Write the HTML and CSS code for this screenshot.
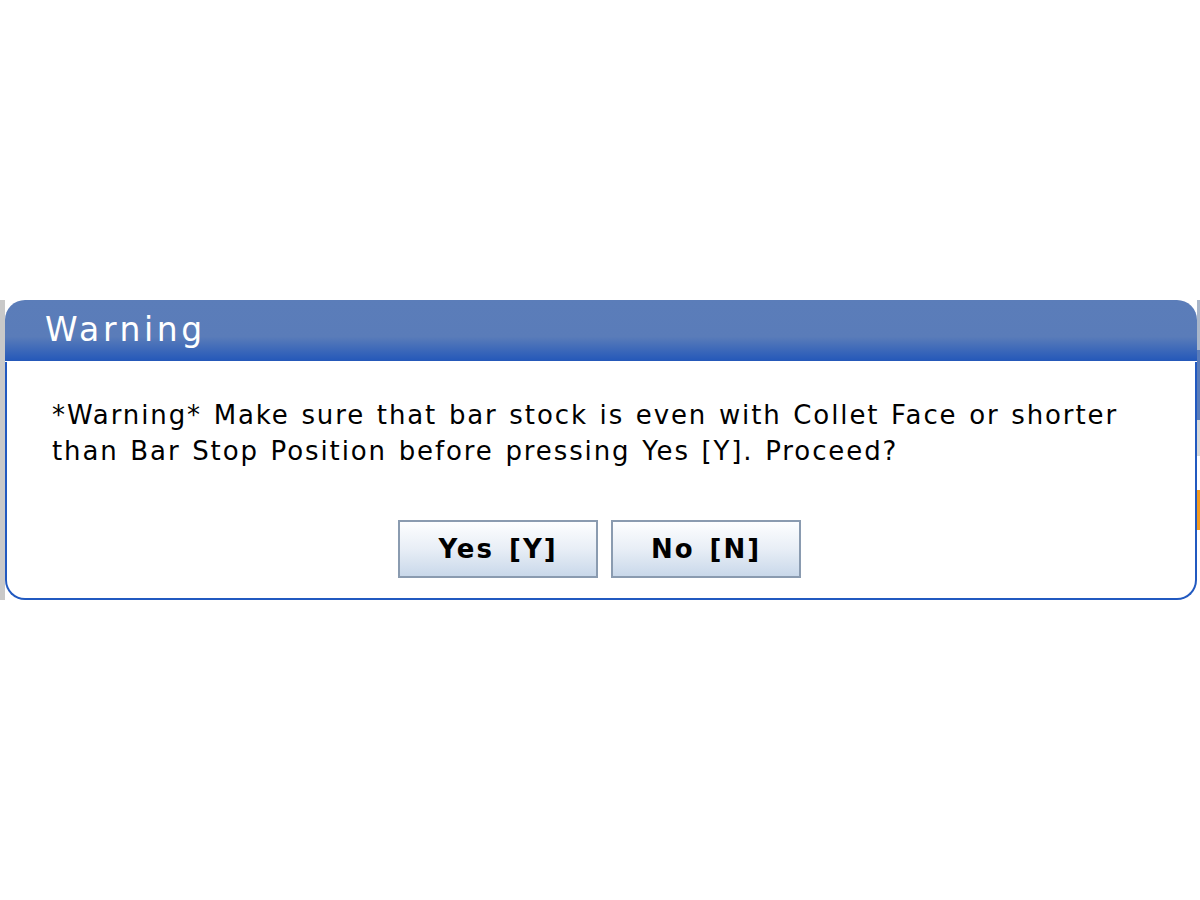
FILE: index.html
```html
<!DOCTYPE html>
<html lang="en">
  <head>
    <meta charset="UTF-8" />
    <meta name="viewport" content="width=device-width, initial-scale=1.0" />
    <title>Warning</title>
    <link rel="stylesheet" href="styles.css">
  </head>
  <body>
    <div class="screen">
      <div class="edge-left"></div>
      <div class="dialog">
        <div class="dialog-title">Warning</div>
        <div class="dialog-body">
          <p class="dialog-text">*Warning* Make sure that bar stock is even with Collet Face or shorter than Bar Stop Position before pressing Yes [Y]. Proceed?</p>
          <div class="dialog-buttons">
            <button class="dialog-button yes">Yes [Y]</button>
            <button class="dialog-button no">No [N]</button>
          </div>
        </div>
      </div>
      <div class="edge-right">
        <span class="edge-piece grey"></span>
        <span class="edge-piece blue"></span>
        <span class="edge-piece light"></span>
        <span class="edge-piece white"></span>
        <span class="edge-piece orange"></span>
        <span class="edge-piece white tall"></span>
      </div>
    </div>
  </body>
</html>
```

FILE: styles.css
```css
* {
  margin: 0;
  padding: 0;
  box-sizing: border-box;
}

body {
  background-color: #fff;
  font-family: "DejaVu Sans", sans-serif;
}

.screen {
  display: flex;
  margin-top: 300px;
  height: 300px;
}

.edge-left {
  width: 5px;
  background-color: #c9c9c9;
}

.dialog {
  flex: 1;
  display: flex;
  flex-direction: column;
}

.dialog-title {
  height: 62px;
  padding: 10px 0 0 40px;
  border-radius: 20px 20px 0 0;
  background: linear-gradient(to bottom, #5b7db9 0%, #5a7cb9 60%, #2458b9 100%);
  color: #fff;
  font-size: 33px;
  letter-spacing: 3.6px;
  line-height: 40px;
  border-bottom: 1px solid #fff;
}

.dialog-body {
  flex: 1;
  border: 2px solid #2159c0;
  border-top: none;
  border-radius: 0 0 20px 20px;
  background-color: #fff;
  padding: 35px 0 0 45px;
}

.dialog-text {
  color: #000;
  font-size: 26px;
  letter-spacing: 1.9px;
  word-spacing: 1.5px;
  line-height: 36px;
  padding-right: 60px;
}

.dialog-buttons {
  display: flex;
  justify-content: center;
  gap: 13px;
  margin-top: 51px;
  padding-right: 48px;
}

.dialog-button {
  height: 58px;
  border: 2px solid #8a9bb0;
  background: linear-gradient(to bottom, #fdfeff 0%, #e8eef6 50%, #c9d8ea 100%);
  font-family: "DejaVu Sans", sans-serif;
  font-weight: bold;
  font-size: 26px;
  letter-spacing: 2px;
  word-spacing: 4px;
  color: #000;
}

.dialog-button.yes {
  width: 200px;
}

.dialog-button.no {
  width: 190px;
}

.edge-right {
  width: 3px;
  display: flex;
  flex-direction: column;
}

.edge-piece {
  display: block;
}

.edge-piece.grey {
  height: 50px;
  background-color: #a9b6c9;
}

.edge-piece.blue {
  height: 70px;
  background-color: #5a7cb9;
}

.edge-piece.light {
  height: 36px;
  background-color: #d9d9d9;
}

.edge-piece.white {
  height: 34px;
  background-color: #fff;
}

.edge-piece.orange {
  height: 40px;
  background-color: #f39a1f;
}

.edge-piece.tall {
  flex: 1;
}
```
